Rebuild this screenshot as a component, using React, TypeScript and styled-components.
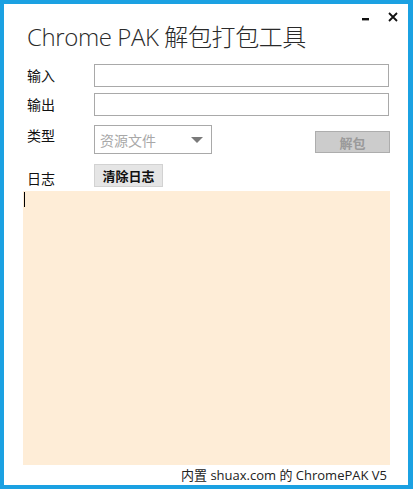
import styled, { createGlobalStyle } from "styled-components";

const GlobalStyle = createGlobalStyle`
  html, body {
    margin: 0;
    padding: 0;
    background: #1ba1e2;
  }
  * {
    box-sizing: border-box;
  }
`;

const FONT = `"Open Sans", "Noto Sans CJK SC", sans-serif`;

const Frame = styled.div`
  width: 413px;
  height: 489px;
  border: solid #1ba1e2;
  border-width: 4px 5px 4px 4px;
  background: #fff;
  display: flex;
  flex-direction: column;
  font-family: ${FONT};
  color: #222;
`;

const Header = styled.header`
  height: 60px;
  display: flex;
  justify-content: space-between;
  align-items: flex-start;
`;

const Title = styled.h1`
  margin: 0;
  padding: 17px 0 0 23px;
  font-size: 24px;
  line-height: 32px;
  font-weight: 300;
  color: #2a2a2a;
  letter-spacing: -0.4px;
`;

const Controls = styled.div`
  display: flex;
  align-items: flex-start;
  gap: 15px;
  padding: 7px 9px 0 0;
`;

const CtrlButton = styled.button`
  border: none;
  background: none;
  padding: 0;
  width: 12px;
  height: 12px;
  display: flex;
  cursor: pointer;
`;

const Row = styled.div<{ $mt: number }>`
  display: grid;
  grid-template-columns: 67px 1fr auto;
  align-items: flex-start;
  margin-top: ${(p) => p.$mt}px;
  padding: 0 18px 0 23px;
`;

const Label = styled.span<{ $dy?: number }>`
  font-size: 14px;
  line-height: 23px;
  margin-top: ${(p) => p.$dy ?? 0}px;
  color: #111;
`;

const TextInput = styled.input`
  grid-column: 2 / 4;
  height: 23px;
  border: 1px solid #a9a9a9;
  background: #fff;
  outline: none;
  font-family: ${FONT};
  margin-right: 1px;
`;

const Select = styled.div`
  width: 118px;
  height: 29px;
  border: 1px solid #a9a9a9;
  display: flex;
  align-items: center;
  justify-content: space-between;
  padding: 0 8px 0 5px;
  font-size: 14px;
  color: #a8a8a8;
`;

const Arrow = styled.span`
  width: 0;
  height: 0;
  border-left: 6px solid transparent;
  border-right: 6px solid transparent;
  border-top: 6px solid #7a7a7a;
`;

const ActionButton = styled.button<{ $disabled?: boolean }>`
  height: ${(p) => (p.$disabled ? 22 : 23)}px;
  width: ${(p) => (p.$disabled ? 75 : 69)}px;
  margin-top: ${(p) => (p.$disabled ? 6 : 0)}px;
  background: ${(p) => (p.$disabled ? "#cccccc" : "#e5e5e5")};
  border: 1px solid ${(p) => (p.$disabled ? "#adadad" : "#d2d2d2")};
  color: ${(p) => (p.$disabled ? "#9a9a9a" : "#111")};
  font-family: ${FONT};
  font-size: 13px;
  font-weight: 700;
  padding: 0;
  cursor: pointer;
`;

const LogArea = styled.div`
  margin: 1px 18px 0 19px;
  height: 274px;
  background: #feedd7;
  padding: 1px 0 0 1px;
`;

const Caret = styled.div`
  width: 1px;
  height: 15px;
  background: #000;
`;

const Footer = styled.footer`
  flex: 1;
  display: flex;
  justify-content: flex-end;
  align-items: center;
  padding: 0 21px 1px 0;
  font-size: 13px;
  color: #222;
`;

export default function App() {
  return (
    <Frame>
      <GlobalStyle />
      <Header>
        <Title>Chrome PAK 解包打包工具</Title>
        <Controls>
          <CtrlButton aria-label="minimize">
            <svg width="12" height="12" viewBox="0 0 12 12">
              <rect x="2" y="7" width="7" height="2.4" fill="#111" />
            </svg>
          </CtrlButton>
          <CtrlButton aria-label="close">
            <svg width="12" height="12" viewBox="0 0 12 12">
              <path d="M2 2 L10 10 M10 2 L2 10" stroke="#111" strokeWidth="1.8" />
            </svg>
          </CtrlButton>
        </Controls>
      </Header>

      <Row $mt={0}>
        <Label>输入</Label>
        <TextInput />
      </Row>
      <Row $mt={6}>
        <Label>输出</Label>
        <TextInput />
      </Row>
      <Row $mt={9}>
        <Label $dy={-1}>类型</Label>
        <Select>
          资源文件
          <Arrow />
        </Select>
        <ActionButton $disabled>解包</ActionButton>
      </Row>
      <Row $mt={10}>
        <Label $dy={3}>日志</Label>
        <div>
          <ActionButton>清除日志</ActionButton>
        </div>
      </Row>

      <LogArea>
        <Caret />
      </LogArea>

      <Footer>内置 shuax.com 的 ChromePAK V5</Footer>
    </Frame>
  );
}
